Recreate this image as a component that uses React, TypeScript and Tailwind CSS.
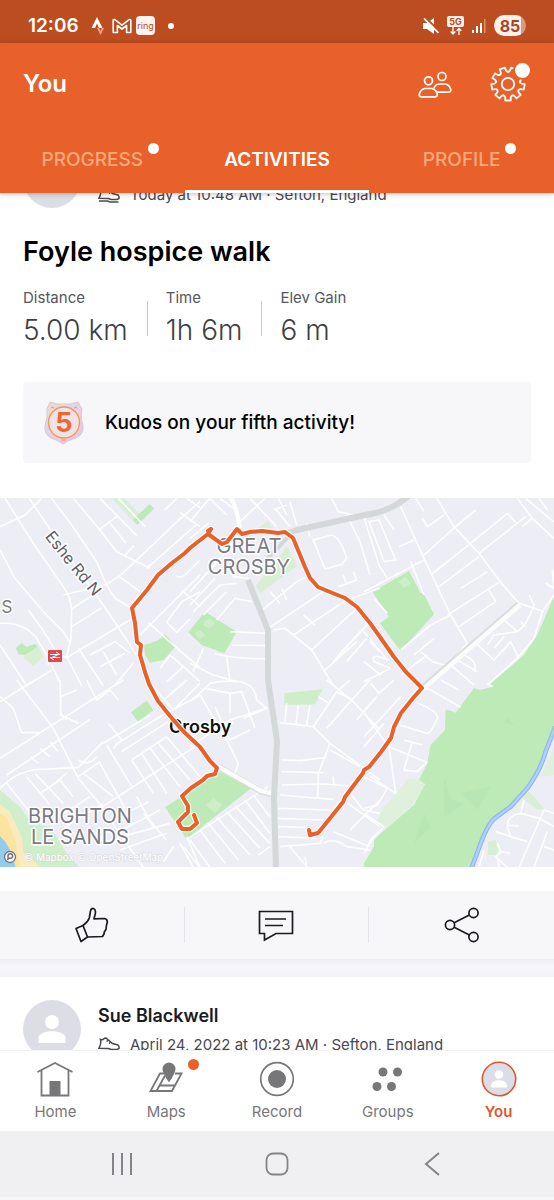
import type { ReactNode } from "react";

const tabs = [
  { label: "PROGRESS", dot: true, active: false },
  { label: "ACTIVITIES", dot: false, active: true },
  { label: "PROFILE", dot: true, active: false },
];

const stats = [
  { label: "Distance", value: "5.00 km" },
  { label: "Time", value: "1h 6m" },
  { label: "Elev Gain", value: "6 m" },
];

function StatusBar() {
  return (
    <div className="flex h-[43px] shrink-0 items-center justify-between bg-[#bc4d20] pt-2 pr-7 pl-7 text-white">
      <div className="flex items-center">
        <span className="w-[52px] text-[19px] leading-6 font-semibold">12:06</span>
        <svg className="ml-2.5 h-5 w-4" viewBox="0 0 16 20" fill="none">
          <path d="M7 1 12.500 12H9L7 7.500 5 12H1.500Z" fill="#fff" />
          <path d="M7 12H9L10.5 15 12 12H14L10.5 19Z" fill="#f2a487" />
        </svg>
        <svg className="ml-1.5 h-4 w-5" viewBox="0 0 20 16" fill="none" stroke="#fff" strokeWidth="1.6">
          <path d="M1.2 14.5V2.5Q1.5 1 3.2 1.8L10 7.2 16.8 1.8Q18.5 1 18.8 2.5V14.5H14.6V7.5L10 11 5.4 7.5V14.5Z" strokeLinejoin="round" />
        </svg>
        <span className="ml-1 flex h-[19px] w-[19px] items-center justify-center rounded-[4px] bg-[#fff4ef] text-[9px] leading-3 text-[#bc4d20]">
          ring
        </span>
        <span className="ml-[13px] h-1.5 w-1.5 rounded-full bg-white" />
      </div>
      <div className="flex items-center gap-2">
        <svg className="h-4 w-4" viewBox="0 0 16 16">
          <path d="M0 5H4L11 0V16L4 11H0Z" fill="#fff" />
          <path d="M2 -1 16 13" stroke="#bc4d20" strokeWidth="2" />
          <path d="M1 .5 15.5 15" stroke="#fff" strokeWidth="1.7" />
        </svg>
        <span className="flex w-[17px] flex-col items-center">
          <span className="flex h-[11px] w-[17px] items-center justify-center rounded-[2px] bg-[#fff1eb] text-[9px] leading-none font-bold text-[#bc4d20]">
            5G
          </span>
          <svg className="h-2 w-3" viewBox="0 0 12 8" fill="none" stroke="#fff" strokeWidth="1.3">
            <path d="M3 0V7M.7 4.5 3 7 5.3 4.5M9 8V1.5M6.7 3.8 9 1.5 11.3 3.8" />
          </svg>
        </span>
        <svg className="h-4 w-3.5" viewBox="0 0 14 16" fill="#fff">
          <rect x="0" y="12" width="2" height="3" />
          <rect x="4" y="8" width="2" height="7" />
          <rect x="8" y="5" width="2" height="10" />
          <rect x="12" y="1" width="1.5" height="14" opacity=".4" />
        </svg>
        <span className="flex h-[21px] w-8 items-center justify-center overflow-hidden rounded-full bg-[linear-gradient(90deg,#fff1eb_85%,#d99a80_85%)] text-[16px] leading-5 font-bold text-[#a8461f]">
          85
        </span>
      </div>
    </div>
  );
}

function FriendsIcon() {
  return (
    <svg className="h-[27px] w-[34px]" viewBox="0 0 34 27" fill="none" stroke="#fff" strokeWidth="1.7">
      <circle cx="10.5" cy="9.8" r="4" />
      <circle cx="24" cy="5.5" r="4" />
      <path d="M7 17.5H14Q18 18.5 19.3 23Q19.5 25.8 17 25.8H3.5Q.8 25.8 1.3 23 3 18 7 17.5Z" />
      <path d="M15.8 17.5Q17.5 13.2 21 13H27Q31.5 13.5 32.8 18.5 33 21.2 30.5 21.2H18.5" />
    </svg>
  );
}

function GearIcon() {
  const teeth = [0, 40, 80, 120, 160, 200, 240, 280, 320];
  return (
    <svg className="h-9 w-9" viewBox="-18 -18 36 36" fill="none" stroke="#fff" strokeWidth="1.8">
      <circle r="6.2" />
      {teeth.map((angle) => (
        <path
          key={angle}
          transform={`rotate(${angle + 20})`}
          d="M-4.2 -11.5Q-2.9 -12 -2.8 -13.3L-2.7 -16.5H2.7L2.8 -13.3Q2.9 -12 4.2 -11.5L4.6 -11.3"
          strokeLinejoin="round"
          strokeLinecap="round"
        />
      ))}
    </svg>
  );
}

function Header() {
  return (
    <header className="relative z-10 shrink-0 bg-[#e8602a] text-white shadow-[0_1px_5px_rgba(0,0,0,0.25)]">
      <div className="flex h-[82px] items-center justify-between pr-7 pl-[23px]">
        <h1 className="text-[24px] leading-8 font-semibold">You</h1>
        <div className="flex items-center gap-[38px]">
          <button type="button" aria-label="Friends">
            <FriendsIcon />
          </button>
          <button type="button" aria-label="Settings" className="relative">
            <GearIcon />
            <span className="absolute -top-[3px] -right-1 h-[15px] w-[15px] rounded-full bg-white shadow-[0_0_0_2px_#e8602a]" />
          </button>
        </div>
      </div>
      <nav className="grid h-[68px] grid-cols-3">
        {tabs.map((tab) => (
          <button
            key={tab.label}
            type="button"
            className={
              tab.active
                ? "border-b-[3px] border-white pt-1 text-[19px] leading-6 font-semibold text-white"
                : "border-b-[3px] border-transparent pt-1 text-[19px] leading-6 font-medium text-[#ffa97b]"
            }
          >
            <span className="relative">
              {tab.label}
              {tab.dot && <span className="absolute -top-[5px] -right-4 h-[11px] w-[11px] rounded-full bg-white" />}
            </span>
          </button>
        ))}
      </nav>
    </header>
  );
}

function Avatar() {
  return (
    <svg className="h-[58px] w-[58px] shrink-0" viewBox="0 0 58 58">
      <circle cx="29" cy="29" r="29" fill="#dddde6" />
      <circle cx="29" cy="22" r="7" fill="#fff" />
      <path d="M15.500 43V38C15.500 29 42.500 29 42.500 38V43Z" fill="#fff" />
    </svg>
  );
}

function ShoeIcon() {
  return (
    <svg className="h-4 w-[22px]" viewBox="0 0 22 16" fill="none" stroke="#494950" strokeWidth="1.5">
      <path d="M2.5 2.5Q4.5 3.5 6.5 1.2L8 1 14.5 6.5 20 8Q21.5 9.5 21 11.5L19 12.5H13L10.5 11.5 1 11.2Q3.5 7 2.5 2.5ZM8.5 4.5 10.5 3M11 6.5 13 4.8M1 14H9.5L12 15H20.5" />
    </svg>
  );
}

function ActivityMeta({ children }: { children: ReactNode }) {
  return (
    <div className="flex items-center gap-2.5 text-[15px] leading-[22px] whitespace-nowrap text-[#494950]">
      <ShoeIcon />
      <span>{children}</span>
    </div>
  );
}

function BadgeIcon() {
  return (
    <svg className="h-11 w-[42px]" viewBox="0 0 42 44">
      <defs>
        <linearGradient id="shield" x1="0" y1="0" x2="1" y2="1">
          <stop offset="0" stopColor="#fbd9b5" />
          <stop offset=".35" stopColor="#dfd5ee" />
          <stop offset=".7" stopColor="#f3c9d6" />
          <stop offset="1" stopColor="#d3c9ec" />
        </linearGradient>
      </defs>
      <path d="M7 1Q15 4 21 3 27 4 35 1L39 8Q37 15 40 25 41 33 33 37 25 39 20 43 15 39 8 37 1 33 2 25 5 15 4 8Z" fill="url(#shield)" stroke="#cfcbdc" />
      <circle cx="21" cy="21.5" r="15.5" fill="#f2e2e8" stroke="#ef9a50" strokeWidth="1.3" />
      <path d="M8 6 11 7M34 6 31 7M18 39H23" stroke="#ee9a72" />
      <text x="21" y="31" textAnchor="middle" fontSize="27" fontWeight="700" fill="#ea6a2c">
        5
      </text>
    </svg>
  );
}

const minor = { fill: "none", stroke: "#fff", strokeOpacity: 0.9, strokeWidth: 5, strokeLinejoin: "round" as const };

function MapAreas() {
  return (
    <>
      <g transform="translate(0 -3) scale(.33333)">
        <path fill="#d8efd3" d="M335 10H372L425 62 397 75ZM80 455 110 445 130 485 100 512 70 490Z" />
        <path
          fill="#bdeab6"
          d="M398 76 448 27 463 40 412 90ZM48 460 65 444 80 456 105 447 112 455 75 480 55 478ZM432 450Q480 440 495 418L527 455 490 495 450 503 435 480Z"
        />
      </g>
      <g transform="translate(190 -3) scale(.33333)">
        <path fill="#d8efd3" d="M198 272 292 155 322 212 210 295ZM205 100 235 78 245 100Z" />
        <path fill="#bdeab6" d="M-5 412 45 350 140 410 103 475 35 450Z" />
        <path fill="#cdeec8" d="M42 378 60 370 75 385 60 400 42 392ZM15 415 32 405 45 420 30 435Z" />
      </g>
      <g transform="translate(364 -3) scale(.33333)">
        <path fill="#bdeab6" d="M25 290 135 228 170 295H178L210 358 110 468 48 385 75 365ZM572 300 520 420 480 480 375 570H572Z" />
        <path fill="#cdeec8" d="M103 260 125 245 142 265 120 280Z" />
      </g>
      <g transform="translate(0 182) scale(.33333)">
        <path fill="#cfeecb" d="M0 330 60 382 95 430 150 440 200 520 240 564H0Z" />
        <path fill="#faeac0" d="M0 372 30 395 65 470 70 515 125 564H0Z" />
        <path fill="#fbe3a0" d="M0 400 20 410 45 480 60 564H0Z" />
        <path fill="#94cdec" d="M0 468Q35 500 47 564H0Z" />
        <path fill="#bdeab6" d="M393 97 440 62 460 90 415 127Z" />
      </g>
      <g transform="translate(190 182) scale(.33333)">
        <path fill="#cdeec8" d="M283 40 397 28 375 73 283 75Z" />
        <path fill="#bdeab6" d="M-75 382 90 275 183 325-10 477Z" />
        <path fill="#cdeec8" d="M48 375 70 355 97 375 75 400Z" />
      </g>
      <g transform="translate(364 182) scale(.33333)">
        <path
          fill="#bdeab6"
          d="M572 0H400L385 20 350 30 330 25 275 98 245 88 243 150 200 195 190 250 165 300 183 312 150 375 65 447 30 480V500L0 550V564H320L385 425 430 385 490 325 545 215 572 150Z"
        />
        <path fill="#dff1dc" d="M135 295 165 300 183 312 145 375 65 447 35 430 60 380ZM572 195 530 290 572 285Z" />
        <path fill="#d8efd3" d="M372 485 395 480 405 525 372 525ZM470 350 490 330 540 385 520 390Z" />
        <path fill="#b8e7b5" d="M240 290 262 360 300 370 240 410ZM180 400 200 440 150 490 170 430ZM290 340 380 320 340 390ZM430 110 450 135 420 130Z" />
        <path d="M322 566 350 490Q370 435 392 415L440 380 490 325Q530 270 545 215L574 140" fill="none" stroke="#8fb8f0" strokeWidth="14" />
        <path d="M322 566 350 490Q370 435 392 415L440 380 490 325Q530 270 545 215L574 140" fill="none" stroke="#b0d0fa" strokeWidth="7" />
      </g>
    </>
  );
}

function MapRoads() {
  return (
    <>
      <g transform="translate(0 -3) scale(.33333)" {...minor}>
        <path d="M15 10 100 145 190 275Q215 310 215 350L213 430 200 485M88 10 145 95 320 345 410 480M155 10 215 90 290 200 320 270 345 310 395 340M220 10 300 105 350 170 450 220" />
        <path d="M0 165 45 250 130 350 190 410 208 440M0 385Q70 380 110 430L140 480 145 510M0 450 80 572 155 525M85 345 125 400 175 480 200 488 330 410 395 372M215 395 305 338M190 300 320 268 360 242 540 72 600 20M215 342 275 302" />
        <path d="M0 95 75 60 125 10M295 105 355 62M325 78 378 145M300 10 410 122M355 10 435 95M375 180 402 152M358 245 420 290M440 220 590 88M200 485 245 572M235 460 310 572M270 480 345 440 390 475M300 515 375 475M345 570 400 505M310 470 350 540M375 475 330 500" />
        <path d="M445 382 520 450 600 518M420 420 600 240M525 240Q540 255 560 235L600 195M500 382 545 320 600 290M500 382 530 412 570 372M545 285 600 335M540 52 600 95M495 45 530 10M560 10 600 38M155 510 178 560M480 520 510 480 550 515M500 560 550 515 600 560" />
      </g>
      <g transform="translate(190 -3) scale(.33333)" {...minor}>
        <path d="M0 80 50 20 60 10M0 130 55 85M0 290 55 230 100 180M0 330 75 250M10 350 90 270 140 265M40 360 110 290M80 375 135 310 185 320M105 200 130 245 175 250M150 80 225 10M180 10 260 95M255 40 300 95M265 10 290 60M250 45 290 30M300 20 320 90" />
        <path d="M205 355 320 260 360 240M235 400 400 290M250 405 285 400 365 465 430 572M310 420 470 315 570 280M365 465 500 340M120 410 230 415M125 450 230 452M40 460 10 530M75 475Q110 490 235 492M110 485 120 560M0 505 70 540 140 560" />
        <path d="M370 135 425 120Q450 125 470 190L455 208 405 222ZM425 10 445 50 490 60M350 85 360 125M490 230 500 255 445 275M460 240 470 270M275 280 290 315M240 290 270 325M340 360 375 390M430 500 540 380 570 410M400 530 500 440M445 480 520 400M470 500 530 430M540 440 570 470M470 60 510 140 540 240M520 60 570 220M60 10 110 60M90 10 130 40" />
        <path d="M120 0Q145 50 150 105" strokeWidth="13" />
      </g>
      <g transform="translate(364 -3) scale(.33333)" {...minor}>
        <path d="M110 35 180 190 260 360 310 445M215 5 270 95 345 175 410 262 465 325 540 350M180 180 275 95 335 45M200 240 320 145 430 55 455 82M345 175 485 65M225 275 345 185M290 280 370 230M250 360 405 262M285 395 395 320 372 280M0 290 180 195M110 465 200 390 260 360" />
        <path d="M460 10 505 70 570 130M505 70 475 95M485 10 550 65 570 80M525 10 550 45M15 80 45 75 95 195 60 200ZM60 60 90 105M155 10 180 50M175 70 190 95 240 60M105 155 150 135M140 200 180 300M45 210 70 250M545 265 570 280 565 225M495 300 510 330Q490 390 460 410L420 375M470 380 485 395" />
        <path d="M570 300 535 350 510 430 460 490 370 570M310 445 270 490 340 530M300 480Q345 500 330 530M260 510 330 570M330 440 390 495 440 440 465 490M370 450 390 420 460 410M390 460 420 425M150 480 210 430M170 470 205 500 240 510M110 540 190 480M30 310 70 355M0 410 70 495Q20 470 30 500L80 520M0 500 50 540M0 560 80 520" />
        <path d="M175 580 310 462 465 328" stroke="#d9dbdc" strokeWidth="20" />
        <path d="M178 582 315 462 468 330" strokeWidth="14" />
      </g>
      <g transform="translate(0 182) scale(.33333)" {...minor}>
        <path d="M50 0 160 145 235 295 310 385M0 65 105 0M0 235 330 25 370 0M0 50 40 85 65 158 120 158M180 0 183 105 235 130M20 285 270 118M0 325Q60 265 130 268L235 262 310 185M20 310 100 410M80 290 150 375M105 280 190 370M235 290 300 245M235 240Q265 260 290 230M300 250 375 385M250 280 340 350M300 385 430 300 600 190" />
        <path d="M325 130 365 180 340 205M260 0 290 60 330 30 355 60M320 195 395 320M345 195 480 110 600 45M365 215 505 125M310 190 450 105M395 240 500 170 600 290M425 220 500 340M450 205 540 320M475 190 570 300M395 240 460 340M150 185 175 215M120 205 150 230M90 230 115 250M180 50 230 30M200 120 180 100M160 420 270 350M190 445 310 370" />
        <path d="M180 300 220 350M150 320 200 280M120 340 180 300M340 420 445 365M365 450 480 390M330 480 510 430M360 510 500 460M410 350 460 440M330 420 430 562M430 400 500 480M490 545 520 500M460 20 520 90 600 10M480 70 560 0M560 470 600 562M540 490 580 562" />
      </g>
      <g transform="translate(190 182) scale(.33333)" {...minor}>
        <path d="M0 65 45 25 60 10M45 25 120 40 155 35 195 145M60 10Q100 0 145 5 195 10 200 60L230 85 160 115M0 200 120 120 230 85M120 40 120 100M30 45 110 180 145 250 135 280M75 80 120 180 180 150M270 128 370 140 420 190 570 300M275 240 330 242 410 232M275 275 400 278M275 315 400 312 480 318M270 345 430 358M265 385 420 390M265 415 400 420M265 440 350 442M265 470 380 475M270 500 390 490 400 470" />
        <path d="M290 70 285 125M325 75 318 132M360 75 350 135M370 140 440 35 480 0M410 0 485 60 570 150M385 50 415 68M420 190 385 280 383 355M430 290 432 315M440 35 485 60 540 0M485 60 410 145M510 260 420 210M460 360 570 440M485 345 520 390 570 400M480 450 570 360M430 455 540 500M400 490Q430 470 470 500L540 510M300 500 350 560 345 530M500 120 560 50" />
        <path d="M-10 478 235 320M30 450 105 550M55 430 145 540M80 412 180 525M110 395 210 505M135 378 240 490M165 360 240 460M190 345 240 410M0 480 60 562M-20 500 30 562M205 525 240 500" />
        <path d="M85 260 210 333 245 343" stroke="#d9dbdc" strokeWidth="18" />
        <path d="M85 260 210 331 245 341" strokeWidth="13" />
      </g>
      <g transform="translate(364 182) scale(.33333)" {...minor}>
        <path d="M190 25 290 82M230 0 285 30M385 20 370 10M160 68Q225 95 220 115 200 160 190 160L105 135M75 200 185 245M0 100 75 200 95 340 20 290M120 180 175 195M145 185 120 270 160 275 190 245M0 290 70 325 40 375 0 385M20 10 45 40 90 0M0 170 110 50M0 200 60 130M0 400 60 440 20 480 10 500M0 520 30 470" />
        <path d="M480 360 470 400Q430 405 430 440L440 470 490 485M430 435 465 438M470 400 525 415 570 440M540 390 465 562M540 390 570 400M550 455 510 562M440 470 395 455M400 490 410 515 440 520M400 530 405 562M360 510 345 562M410 515 395 530 430 562M540 500 570 510" />
      </g>
      <g fill="none" stroke="#d5d8da" strokeLinejoin="round">
        <path d="M248 82 268 132V182L277 243 274 300 276 372" strokeWidth="6" />
        <path d="M264 64 290 37" strokeWidth="4" />
        <path d="M288 35 297 32 365 17Q390 14 410-3" strokeWidth="6" />
      </g>
    </>
  );
}

const routePath =
  "M211 31 208 36 190 50 185 55 172 65 158 77 147 92 132 110 135 125 137 144 141 147 140 157 143 167 145 174 149 186 158 203 170 218 183 233 200 249 210 263 217 270 215 276 207 278 203 282 191 290 182 298 188 308 188 314 178 324 182 331H190L197 325 194 317M211 31 208 33M208 36 222 46 227 44 237 31 242 36 250 34 262 33 278 35 285 34 293 40 305 69 310 80 318 89 330 94 345 100 357 109 370 125 380 139 394 159 406 174 422 190 414 199 401 215 394 229 391 240 381 254 369 269 364 272 363 275 345 299 343 304 323 329 318 335 310 337 309 332";

function RouteMap() {
  return (
    <svg className="block h-auto w-full" viewBox="0 0 554 369" role="img" aria-label="Route map of Crosby">
      <rect width="554" height="369" fill="#ecedf5" />
      <MapAreas />
      <MapRoads />
      <g transform="translate(48 152)">
        <rect width="14" height="12" rx="1" fill="#e0474f" />
        <path d="M2 4.500H12L8 2M12 7.500H2L6 10M4 7.500 10 4.500" fill="none" stroke="#fff" />
      </g>
      <g fill="#7b7b85" stroke="#fff" strokeWidth="3" strokeLinejoin="round" paintOrder="stroke" textAnchor="middle" fontSize="20">
        <text x="249" y="55">GREAT</text>
        <text x="249" y="76">CROSBY</text>
        <text x="80" y="325">BRIGHTON</text>
        <text x="80" y="346">LE SANDS</text>
        <text x="7" y="115" fontSize="17">S</text>
        <text transform="translate(69 69) rotate(51)" fontSize="16" fill="#5d5d64">
          Eshe Rd N
        </text>
      </g>
      <text x="169" y="235" fontSize="18" fontWeight="600" fill="#111" stroke="#fff" strokeWidth="3" paintOrder="stroke">
        Crosby
      </text>
      <g fill="none" strokeLinejoin="round" strokeLinecap="round">
        <path d={routePath} stroke="#fff" strokeOpacity=".8" strokeWidth="6.400" />
        <path d={routePath} stroke="#e8602a" strokeWidth="4" />
      </g>
      <circle cx="10" cy="359" r="5.5" fill="#fff" stroke="#70757c" strokeWidth="1.3" />
      <path d="M8 362V358A2.3 2.3 0 1 1 10.3 360.3H8" fill="none" stroke="#70757c" strokeWidth="1.5" />
      <text x="24" y="363" fontSize="10" fill="#fff" stroke="#c9ccd6" strokeWidth="1" strokeOpacity=".6" paintOrder="stroke">
        © Mapbox © OpenStreetMap
      </text>
    </svg>
  );
}

function ThumbIcon() {
  return (
    <svg className="h-9 w-9" viewBox="0 0 36 36" fill="none" stroke="#1b1b1f" strokeWidth="1.7" strokeLinejoin="round">
      <path d="M2 21.5 9 18.5 13.5 30 7 34.5Z" />
      <path d="M9 18.5Q14 15 15.3 11L16.5 4Q17.2 1 19.5 1.5 22 2.5 21.3 6.5L20 11.8 30.5 11.5Q33.5 12 33.3 15L32.5 18 32 22.5 30.5 24.5 30 27 28.5 29.5 13.5 30" />
    </svg>
  );
}

function CommentIcon() {
  return (
    <svg className="h-9 w-9" viewBox="0 0 36 36" fill="none" stroke="#1b1b1f" strokeWidth="1.7">
      <path d="M1.5 4.5H34.5V26.5H18L6.5 33V26.5H1.5ZM7 12H28M7 18.5H25" />
    </svg>
  );
}

function ShareIcon() {
  return (
    <svg className="h-9 w-9" viewBox="0 0 36 36" fill="none" stroke="#1b1b1f" strokeWidth="1.7">
      <circle cx="6" cy="18" r="4.6" />
      <circle cx="29.5" cy="6" r="4.6" />
      <circle cx="29.5" cy="30" r="4.6" />
      <path d="M10.2 15.8 25.3 8.1M10.2 20.2 25.3 27.9" />
    </svg>
  );
}

const actions = [
  { label: "Give kudos", icon: <ThumbIcon /> },
  { label: "Comment", icon: <CommentIcon /> },
  { label: "Share", icon: <ShareIcon /> },
];

const navItems = [
  {
    label: "Home",
    icon: (
      <svg className="h-9 w-9" viewBox="0 0 36 36" fill="none" stroke="#77777a" strokeWidth="1.8">
        <path d="M.5 11 18 2 35.5 11M4.5 9.5V34.5H31.5V9.5" />
        <rect x="12.5" y="20" width="11" height="14" fill="#77777a" stroke="none" />
      </svg>
    ),
  },
  {
    label: "Maps",
    dot: true,
    icon: (
      <svg className="h-9 w-9" viewBox="0 0 36 36" fill="none" stroke="#77777a" strokeWidth="1.8">
        <path d="M16 12.5H12L2.500 30H24L33.500 12.500H27M17 14.500 8.500 30M12 24.500H26.500" />
        <path d="M21 21.500Q14.500 12 14.500 8A6.500 6.500 0 0 1 27.500 8Q27.500 12 21 21.500Z" fill="#77777a" stroke="none" />
      </svg>
    ),
  },
  {
    label: "Record",
    icon: (
      <svg className="h-9 w-9" viewBox="0 0 36 36">
        <circle cx="18" cy="18" r="16.3" fill="none" stroke="#77777a" strokeWidth="1.7" />
        <circle cx="18" cy="18" r="9" fill="#77777a" />
      </svg>
    ),
  },
  {
    label: "Groups",
    icon: (
      <svg className="h-9 w-9" viewBox="0 0 36 36" fill="#77777a">
        <circle cx="13" cy="11" r="4.5" />
        <circle cx="27.5" cy="11" r="4.5" />
        <circle cx="7" cy="25.5" r="4.5" />
        <circle cx="21.5" cy="25.5" r="4.5" />
      </svg>
    ),
  },
  {
    label: "You",
    active: true,
    icon: (
      <svg className="h-9 w-9" viewBox="0 0 36 36">
        <circle cx="18" cy="18" r="16.7" fill="#dddde9" stroke="#e0562a" strokeWidth="1.6" />
        <circle cx="18" cy="13.5" r="4.3" fill="#fff" />
        <path d="M10 26.5V24C10 17.5 26 17.5 26 24V26.5Z" fill="#fff" />
      </svg>
    ),
  },
];

function Feed() {
  return (
    <main className="min-h-0 flex-1 overflow-hidden">
      <article>
        <div className="flex h-[15px] items-end gap-[17px] overflow-hidden px-[23px]">
          <Avatar />
          <div className="pb-0.5">
            <ActivityMeta>Today at 10:48 AM · Sefton, England</ActivityMeta>
          </div>
        </div>
        <div className="px-[23px]">
          <h2 className="pt-6 text-[27px] leading-10 font-semibold text-black">Foyle hospice walk</h2>
          <dl className="mt-4 flex items-center">
            {stats.map((stat, index) => (
              <div key={stat.label} className={index > 0 ? "flex items-center pl-[19px]" : "flex items-center"}>
                {index > 0 && <span className="mr-[18px] h-[35px] w-px bg-[#c9c9cf]" />}
                <div>
                  <dt className="text-[15px] leading-5 text-[#56565c]">{stat.label}</dt>
                  <dd className="mt-1 text-[28px] leading-9 font-light text-[#3f3f45]">{stat.value}</dd>
                </div>
              </div>
            ))}
          </dl>
          <div className="mt-[34px] flex h-[81px] items-center gap-5 rounded bg-[#f7f7f9] px-5">
            <BadgeIcon />
            <p className="text-[19px] leading-6 font-medium text-black">Kudos on your fifth activity!</p>
          </div>
        </div>
        <div className="mt-[35px]">
          <RouteMap />
        </div>
        <div className="mt-6 grid grid-cols-3 bg-[#f7f7f9]">
          {actions.map((action, index) => (
            <button key={action.label} type="button" aria-label={action.label} className="flex h-[68px] items-center">
              <span className="flex flex-1 justify-center">{action.icon}</span>
              {index < actions.length - 1 && <span className="h-9 w-px bg-[#e4e4e9]" />}
            </button>
          ))}
        </div>
      </article>
      <div className="h-[18px] bg-[linear-gradient(#eeeef4,#f5f5fb_40%,#f3f3f9)]" />
      <article className="flex gap-[17px] px-[23px] pt-[23px]">
        <Avatar />
        <div>
          <h3 className="pt-0.5 text-[18px] leading-7 font-semibold text-[#1b1b1f]">Sue Blackwell</h3>
          <div className="mt-1">
            <ActivityMeta>April 24, 2022 at 10:23 AM · Sefton, England</ActivityMeta>
          </div>
        </div>
      </article>
    </main>
  );
}

function BottomNav() {
  return (
    <nav className="grid h-[81px] shrink-0 grid-cols-5 border-t border-[#f3f3f5] bg-white">
      {navItems.map((item) => (
        <a
          key={item.label}
          href={`#${item.label.toLowerCase()}`}
          className={
            item.active
              ? "flex flex-col items-center gap-[3px] pt-[10px] text-[15px] leading-6 font-semibold text-[#e0562a]"
              : "flex flex-col items-center gap-[3px] pt-[10px] text-[15px] leading-6 text-[#77777a]"
          }
        >
          <span className="relative">
            {item.icon}
            {item.dot && <span className="absolute -top-0.5 -right-[15px] h-[11px] w-[11px] rounded-full bg-[#e8602a]" />}
          </span>
          {item.label}
        </a>
      ))}
    </nav>
  );
}

function SystemNav() {
  return (
    <div className="flex h-[69px] shrink-0 items-center justify-between border-b-[3px] border-[#f6f6f8] bg-[#f0f0f2] px-[109px]">
      <button type="button" aria-label="Recent apps">
        <svg className="h-6 w-[26px]" viewBox="0 0 26 24" stroke="#848488" strokeWidth="2">
          <path d="M4 1V23M13 1V23M22 1V23" />
        </svg>
      </button>
      <button type="button" aria-label="Home screen">
        <svg className="h-6 w-6" viewBox="0 0 24 24" fill="none" stroke="#848488" strokeWidth="1.8">
          <rect x="1.5" y="1.5" width="21" height="21" rx="6.5" />
        </svg>
      </button>
      <button type="button" aria-label="Back">
        <svg className="h-6 w-[26px]" viewBox="0 0 26 24" fill="none" stroke="#848488" strokeWidth="2">
          <path d="M20 1 7 12 20 23" />
        </svg>
      </button>
    </div>
  );
}

export default function App() {
  return (
    <div className="flex h-screen flex-col overflow-hidden bg-white font-[Inter,sans-serif]">
      <StatusBar />
      <Header />
      <Feed />
      <BottomNav />
      <SystemNav />
    </div>
  );
}
